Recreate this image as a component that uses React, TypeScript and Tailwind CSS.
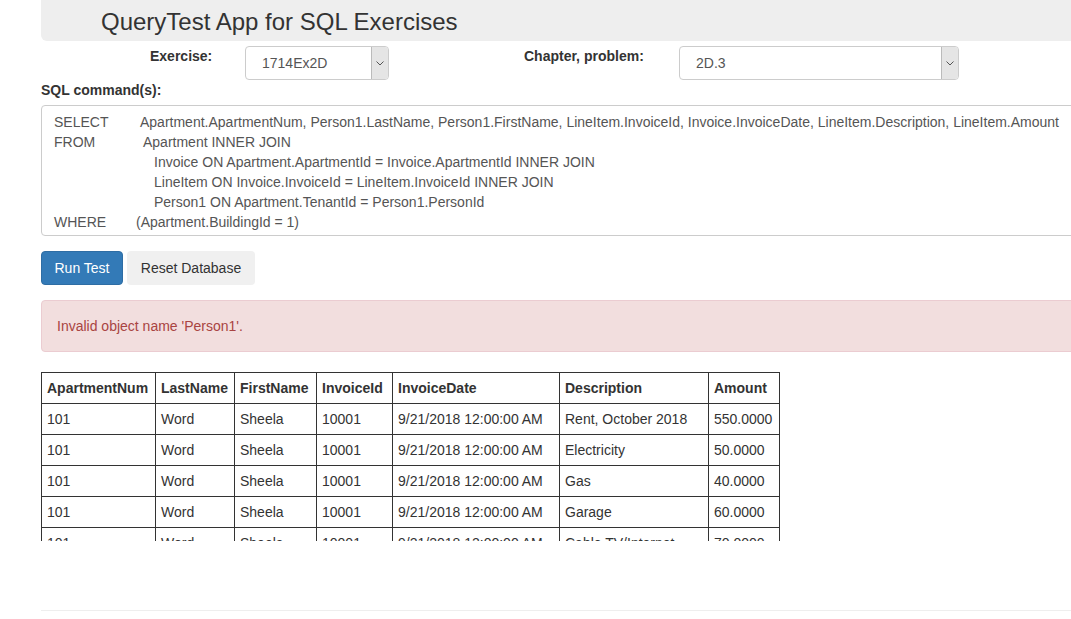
import React from "react";

const columns = [
  { key: "ApartmentNum", w: "w-[114px]" },
  { key: "LastName", w: "w-[79px]" },
  { key: "FirstName", w: "w-[82px]" },
  { key: "InvoiceId", w: "w-[76px]" },
  { key: "InvoiceDate", w: "w-[167px]" },
  { key: "Description", w: "w-[149px]" },
  { key: "Amount", w: "w-[71px]" },
];

const rows = [
  ["101", "Word", "Sheela", "10001", "9/21/2018 12:00:00 AM", "Rent, October 2018", "550.0000"],
  ["101", "Word", "Sheela", "10001", "9/21/2018 12:00:00 AM", "Electricity", "50.0000"],
  ["101", "Word", "Sheela", "10001", "9/21/2018 12:00:00 AM", "Gas", "40.0000"],
  ["101", "Word", "Sheela", "10001", "9/21/2018 12:00:00 AM", "Garage", "60.0000"],
  ["101", "Word", "Sheela", "10001", "9/21/2018 12:00:00 AM", "Cable TV/Internet", "70.0000"],
];

const sqlLines = [
  { kw: "SELECT", pad: "w-[86px]", text: "Apartment.ApartmentNum, Person1.LastName, Person1.FirstName, LineItem.InvoiceId, Invoice.InvoiceDate, LineItem.Description, LineItem.Amount" },
  { kw: "FROM", pad: "w-[89px]", text: "Apartment INNER JOIN" },
  { kw: "", pad: "w-[100px]", text: "Invoice ON Apartment.ApartmentId = Invoice.ApartmentId INNER JOIN" },
  { kw: "", pad: "w-[100px]", text: "LineItem ON Invoice.InvoiceId = LineItem.InvoiceId INNER JOIN" },
  { kw: "", pad: "w-[100px]", text: "Person1 ON Apartment.TenantId = Person1.PersonId" },
  { kw: "WHERE", pad: "w-[82px]", text: "(Apartment.BuildingId = 1)" },
];

function Select({ value, width }: { value: string; width: string }) {
  return (
    <div className={`flex h-[34px] ${width} rounded-[4px] border border-[#ccc] bg-white overflow-hidden`}>
      <div className="flex-1 flex items-center pl-4 text-[14px] text-[#555]">{value}</div>
      <div className="w-[17px] flex items-center justify-center bg-[#e5e5e5] border-l border-[#bbb]">
        <svg width="8" height="5" viewBox="0 0 8 5" fill="none">
          <path d="M0.5 0.5 L4 4 L7.5 0.5" stroke="#555" strokeWidth="1" />
        </svg>
      </div>
    </div>
  );
}

export default function App() {
  return (
    <div className="w-screen h-[619px] overflow-hidden bg-white font-['Liberation_Sans',Arial,sans-serif] text-[14px] text-[#333]">
      <div className="ml-[41px] w-[1100px]">
        <header className="h-[41px] bg-[#eee] rounded-bl-[6px] pl-[60px] flex items-center">
          <h1 className="text-[24px] leading-none text-[#333] pt-[2px]">QueryTest App for SQL Exercises</h1>
        </header>

        <div className="flex items-start mt-[5px] h-[34px]">
          <label className="ml-[109px] w-[95px] font-bold">Exercise:</label>
          <Select value="1714Ex2D" width="w-[144px]" />
          <label className="ml-[135px] w-[155px] font-bold">Chapter, problem:</label>
          <Select value="2D.3" width="w-[280px]" />
        </div>

        <div className="font-bold leading-[20px]">SQL command(s):</div>

        <div className="mt-[5px] h-[131px] border border-[#ccc] rounded-l-[4px] pl-[12px] pt-[6px] text-[#555] leading-[20px]">
          {sqlLines.map((l, i) => (
            <div key={i} className="flex whitespace-nowrap">
              <span className={`${l.pad} shrink-0`}>{l.kw}</span>
              <span>{l.text}</span>
            </div>
          ))}
        </div>

        <div className="flex gap-[4px] mt-[15px]">
          <button className="h-[34px] w-[82px] rounded-[4px] bg-[#337ab7] border border-[#2e6da4] text-white">Run Test</button>
          <button className="h-[34px] w-[128px] rounded-[4px] bg-[#f0f0f0] text-[#333]">Reset Database</button>
        </div>

        <div className="mt-[15px] h-[52px] rounded-l-[4px] bg-[#f2dede] border border-[#ebccd1] text-[#a94442] flex items-center pl-[15px] pt-[1px]">
          Invalid object name 'Person1'.
        </div>

        <div className="mt-[20px] h-[169px] overflow-hidden">
          <table className="border-collapse">
            <thead>
              <tr>
                {columns.map((c) => (
                  <th key={c.key} className={`${c.w} h-[31px] border border-[#333] px-[5px] text-left font-bold`}>
                    {c.key}
                  </th>
                ))}
              </tr>
            </thead>
            <tbody>
              {rows.map((r, i) => (
                <tr key={i}>
                  {r.map((v, j) => (
                    <td key={j} className="h-[31px] border border-[#333] px-[5px] whitespace-nowrap">
                      {v}
                    </td>
                  ))}
                </tr>
              ))}
            </tbody>
          </table>
        </div>

        <hr className="mt-[69px] border-t border-[#eee]" />
      </div>
    </div>
  );
}
